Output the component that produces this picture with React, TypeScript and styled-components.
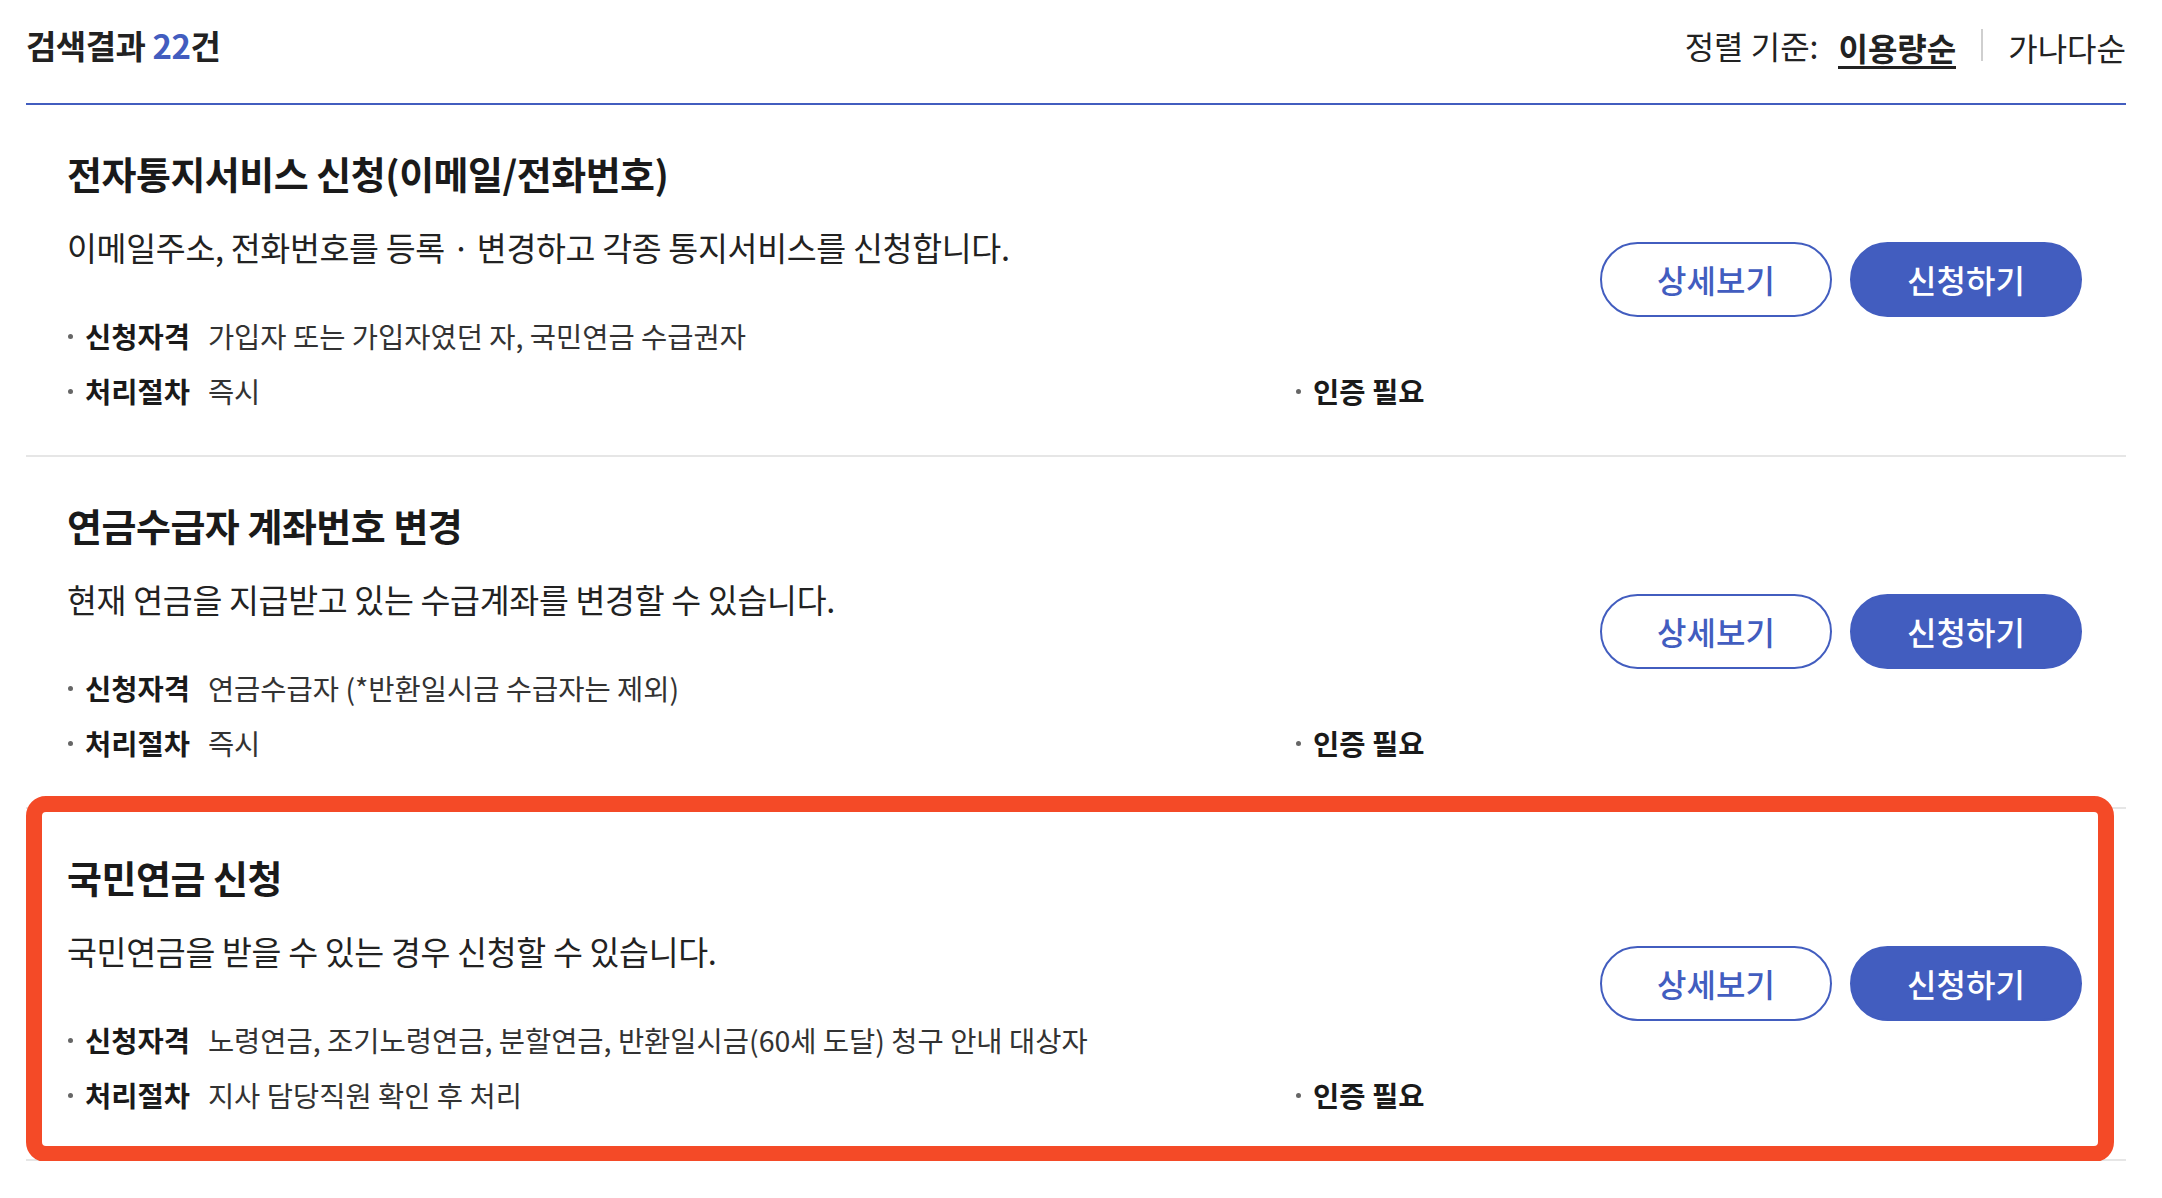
import React from 'react';
import styled, { createGlobalStyle } from 'styled-components';

const GlobalStyle = createGlobalStyle`
  html, body {
    margin: 0;
    padding: 0;
    background: #fff;
  }
  body {
    font-family: "Noto Sans CJK KR", "Noto Sans", sans-serif;
    color: #1a1a1a;
  }
`;

const BLUE = '#425dbf';

const Page = styled.div`
  padding: 0 36px 0 26px;
`;

const Header = styled.div`
  display: flex;
  align-items: flex-start;
  justify-content: space-between;
  height: 81px;
  padding: 22px 0 0 0;
  border-bottom: 2px solid ${BLUE};
`;

const Count = styled.h2`
  margin: 0;
  font-size: 33px;
  line-height: 46px;
  font-weight: 700;
  color: #222;
  letter-spacing: -0.5px;

  em {
    font-style: normal;
    color: ${BLUE};
  }
`;

const Sort = styled.div`
  display: flex;
  align-items: center;
  height: 46px;
  font-size: 32px;
  color: #222;
`;

const SortLabel = styled.span`
  margin-right: 20px;
`;

const SortOption = styled.button<{ active?: boolean }>`
  border: 0;
  background: none;
  padding: 0;
  font-family: inherit;
  font-size: 32px;
  line-height: 38px;
  color: #222;
  font-weight: ${({ active }) => (active ? 700 : 400)};
  border-bottom: 3px solid ${({ active }) => (active ? '#222' : 'transparent')};
  margin-top: 6px;
  cursor: pointer;
`;

const Divider = styled.span`
  width: 2px;
  height: 32px;
  background: #cfcfcf;
  margin: 0 25px;
`;

const List = styled.ul`
  list-style: none;
  margin: 0;
  padding: 0;
`;

const Card = styled.li`
  position: relative;
  display: flex;
  align-items: center;
  padding: 41px 44px 43px 41px;
  border-bottom: 2px solid #e6e6e6;
`;

const Highlight = styled.div`
  position: absolute;
  top: -13px;
  left: 0;
  right: 12px;
  bottom: -3px;
  border: 16px solid #f44a27;
  border-radius: 20px;
  pointer-events: none;
`;

const Info = styled.div`
  flex: 1;
  min-width: 0;
`;

const Title = styled.h3`
  margin: 0;
  font-size: 38px;
  line-height: 53px;
  font-weight: 700;
  color: #1a1a1a;
  letter-spacing: -0.5px;
`;

const Desc = styled.p`
  margin: 24px 0 0;
  font-size: 32.5px;
  line-height: 48px;
  color: #222;
  letter-spacing: -0.3px;
`;

const Meta = styled.div`
  display: grid;
  grid-template-columns: 1228px auto;
  row-gap: 13px;
  margin-top: 44px;
`;

const MetaItem = styled.div<{ wide?: boolean }>`
  display: flex;
  align-items: center;
  font-size: 28.5px;
  line-height: 42px;
  color: #333;
  grid-column: ${({ wide }) => (wide ? '1 / -1' : 'auto')};

  &::before {
    content: '';
    width: 5px;
    height: 5px;
    border-radius: 50%;
    background: #666;
    margin: 0 12px 0 1px;
    flex-shrink: 0;
  }
`;

const MetaLabel = styled.strong`
  font-weight: 700;
  color: #1a1a1a;
  margin-right: 18px;
`;

const Actions = styled.div`
  display: flex;
  gap: 18px;
  flex-shrink: 0;
`;

const Button = styled.button<{ primary?: boolean }>`
  width: 232px;
  height: 75px;
  border-radius: 38px;
  border: 2px solid ${BLUE};
  background: ${({ primary }) => (primary ? BLUE : '#fff')};
  color: ${({ primary }) => (primary ? '#fff' : BLUE)};
  font-family: inherit;
  font-size: 32px;
  font-weight: 500;
  cursor: pointer;
`;

type Service = {
  title: string;
  desc: string;
  target: string;
  process: string;
  auth: string;
  highlight?: boolean;
};

const services: Service[] = [
  {
    title: '전자통지서비스 신청(이메일/전화번호)',
    desc: '이메일주소, 전화번호를 등록 · 변경하고 각종 통지서비스를 신청합니다.',
    target: '가입자 또는 가입자였던 자, 국민연금 수급권자',
    process: '즉시',
    auth: '인증 필요',
  },
  {
    title: '연금수급자 계좌번호 변경',
    desc: '현재 연금을 지급받고 있는 수급계좌를 변경할 수 있습니다.',
    target: '연금수급자 (*반환일시금 수급자는 제외)',
    process: '즉시',
    auth: '인증 필요',
  },
  {
    title: '국민연금 신청',
    desc: '국민연금을 받을 수 있는 경우 신청할 수 있습니다.',
    target: '노령연금, 조기노령연금, 분할연금, 반환일시금(60세 도달) 청구 안내 대상자',
    process: '지사 담당직원 확인 후 처리',
    auth: '인증 필요',
    highlight: true,
  },
];

const App: React.FC = () => {
  return (
    <Page>
      <GlobalStyle />
      <Header>
        <Count>
          검색결과 <em>22</em>건
        </Count>
        <Sort>
          <SortLabel>정렬 기준:</SortLabel>
          <SortOption active>이용량순</SortOption>
          <Divider />
          <SortOption>가나다순</SortOption>
        </Sort>
      </Header>
      <List>
        {services.map((s) => (
          <Card key={s.title}>
            <Info>
              <Title>{s.title}</Title>
              <Desc>{s.desc}</Desc>
              <Meta>
                <MetaItem wide>
                  <MetaLabel>신청자격</MetaLabel>
                  {s.target}
                </MetaItem>
                <MetaItem>
                  <MetaLabel>처리절차</MetaLabel>
                  {s.process}
                </MetaItem>
                <MetaItem>
                  <MetaLabel>{s.auth}</MetaLabel>
                </MetaItem>
              </Meta>
            </Info>
            <Actions>
              <Button>상세보기</Button>
              <Button primary>신청하기</Button>
            </Actions>
            {s.highlight && <Highlight />}
          </Card>
        ))}
      </List>
    </Page>
  );
};

export default App;
